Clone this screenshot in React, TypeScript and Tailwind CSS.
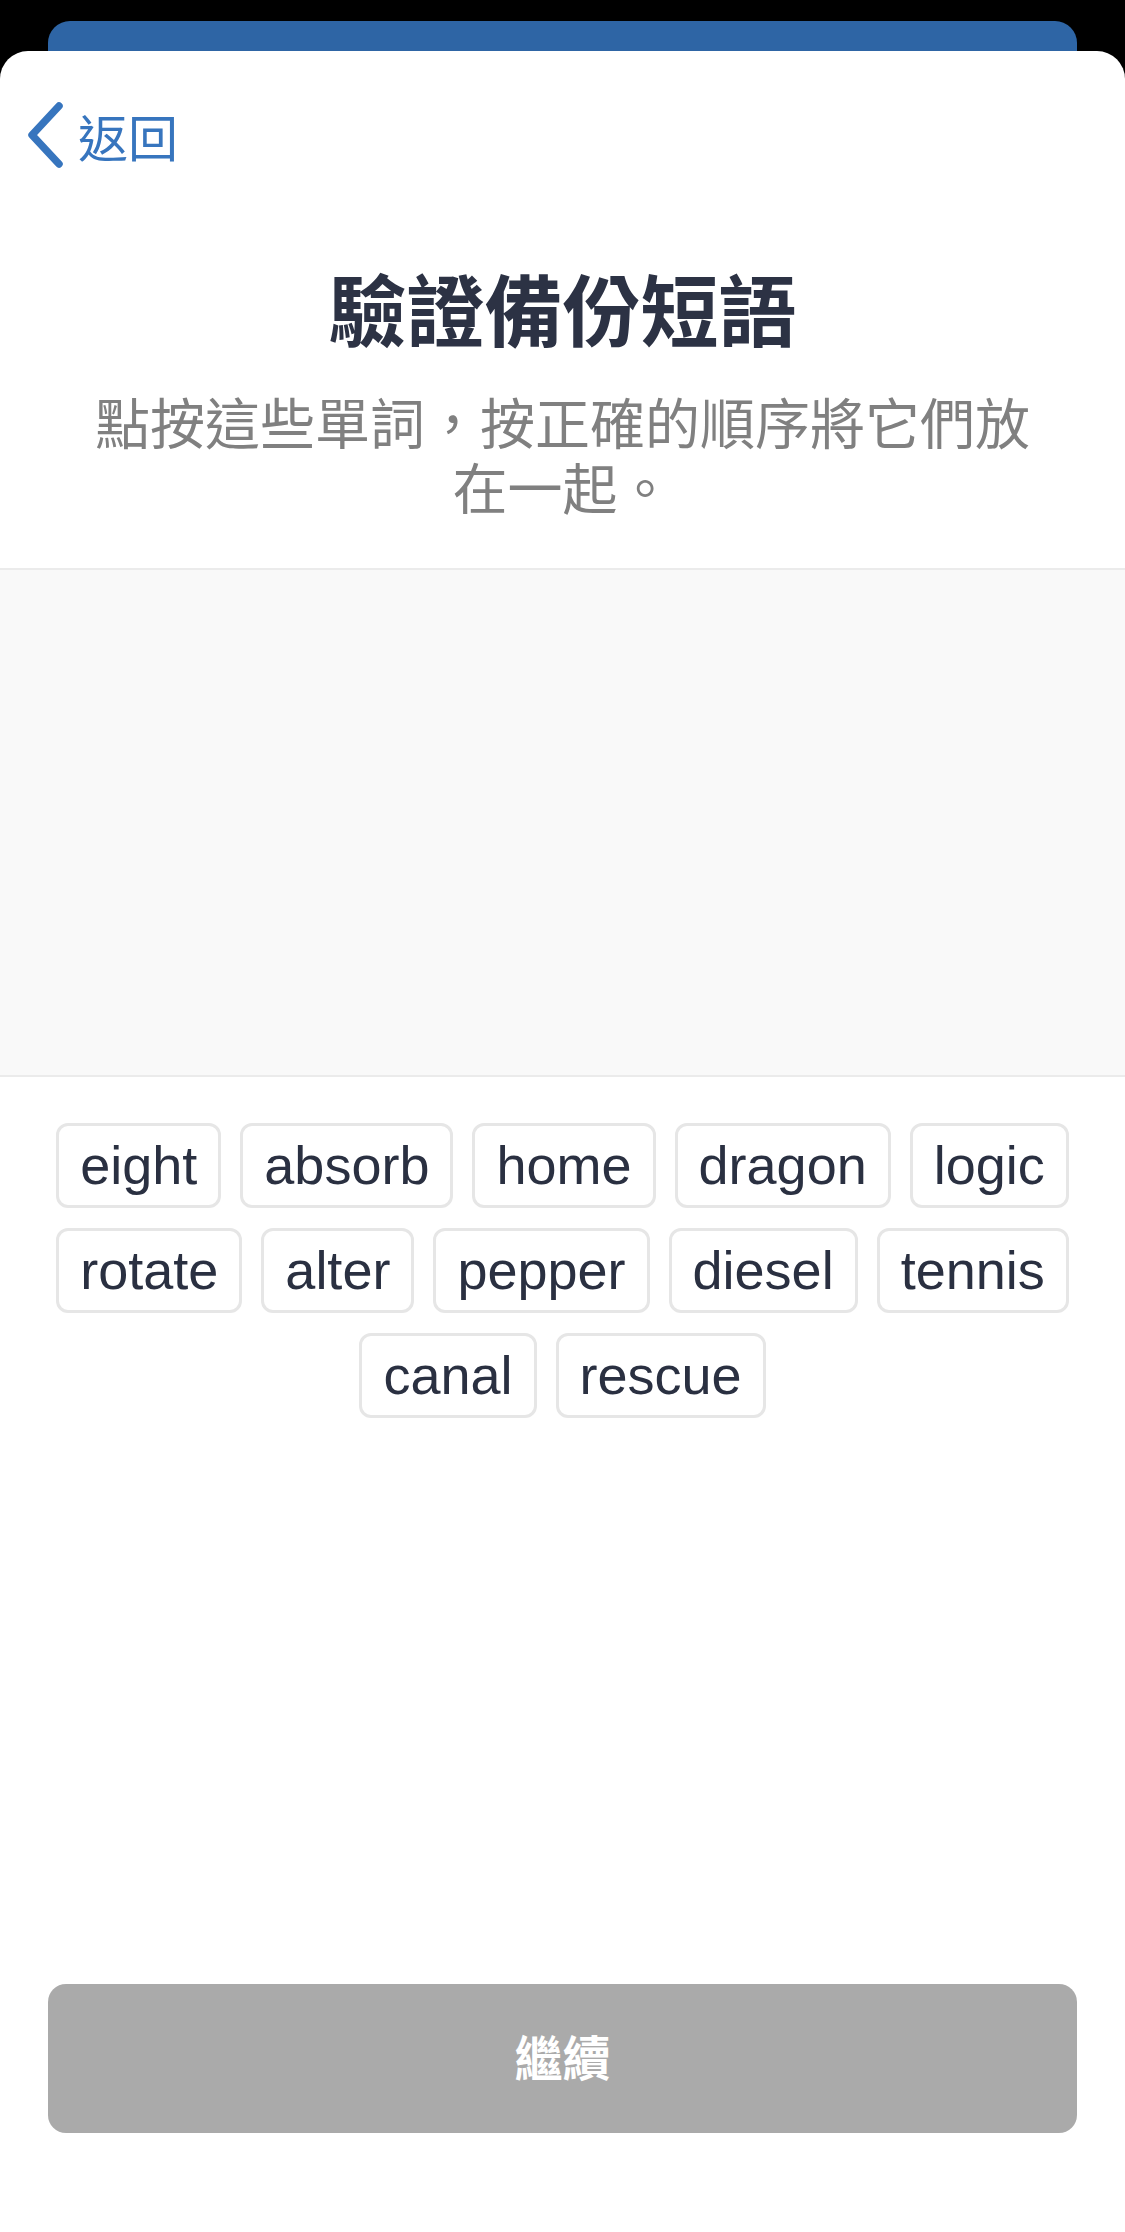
import React from "react";

const rows = ["eight", "absorb", "home", "dragon", "logic", "rotate", "alter", "pepper", "diesel", "tennis", "canal", "rescue"];

export default function App() {
  return (
    <div className="flex h-[2232px] w-[1125px] flex-col bg-black" style={{ fontFamily: '"Liberation Sans", "Noto Sans CJK TC", sans-serif' }}>
      <div className="h-[51px] shrink-0 px-[48px] pt-[21px]">
        <div className="h-[30px] rounded-t-[22px] bg-[#2e65a5]" />
      </div>
      <div className="flex flex-1 flex-col rounded-t-[28px] bg-white">
        <div className="flex h-[168px] items-center pl-[24px]">
          <svg width="44" height="66" viewBox="0 0 44 66" className="shrink-0">
            <path d="M35 4 L8 33 L35 62" fill="none" stroke="#3775be" strokeWidth="7.5" strokeLinecap="round" strokeLinejoin="round" />
          </svg>
          <span className="ml-[10px] text-[50px] leading-none text-[#3775be]" style={{ fontFamily: '"Noto Sans CJK TC", sans-serif' }}>返回</span>
        </div>
        <h1 className="mt-[41px] text-center text-[78px] font-bold leading-[94px] text-[#2c3244]" style={{ fontFamily: '"Noto Sans CJK TC", sans-serif' }}>
          驗證備份短語
        </h1>
        <p className="mx-auto mt-[34px] w-[960px] text-center text-[55px] leading-[65px] text-[#808080]" style={{ fontFamily: '"Noto Sans CJK TC", sans-serif' }}>
          點按這些單詞，按正確的順序將它們放在一起。
        </p>
        <div className="mt-[50px] h-[509px] shrink-0 border-y-2 border-[#ebebeb] bg-[#f9f9f9]" />
        <div className="flex flex-1 flex-col px-[48px] pt-[46px]">
          <div className="flex flex-wrap justify-center gap-x-[19px] gap-y-[20px]">
            {rows.map((w) => (
              <div key={w} className="flex h-[85px] items-center rounded-[12px] border-[3px] border-[#e6e6e6] bg-white px-[21px] text-[54px] text-[#2a3041]">
                {w}
              </div>
            ))}
          </div>
        </div>
        <div className="px-[48px] pb-[99px]">
          <button className="flex h-[149px] w-full items-center justify-center rounded-[18px] bg-[#aaaaaa] pb-[8px] text-[48px] font-semibold text-white" style={{ fontFamily: '"Noto Sans CJK TC", sans-serif' }}>
            繼續
          </button>
        </div>
      </div>
    </div>
  );
}
